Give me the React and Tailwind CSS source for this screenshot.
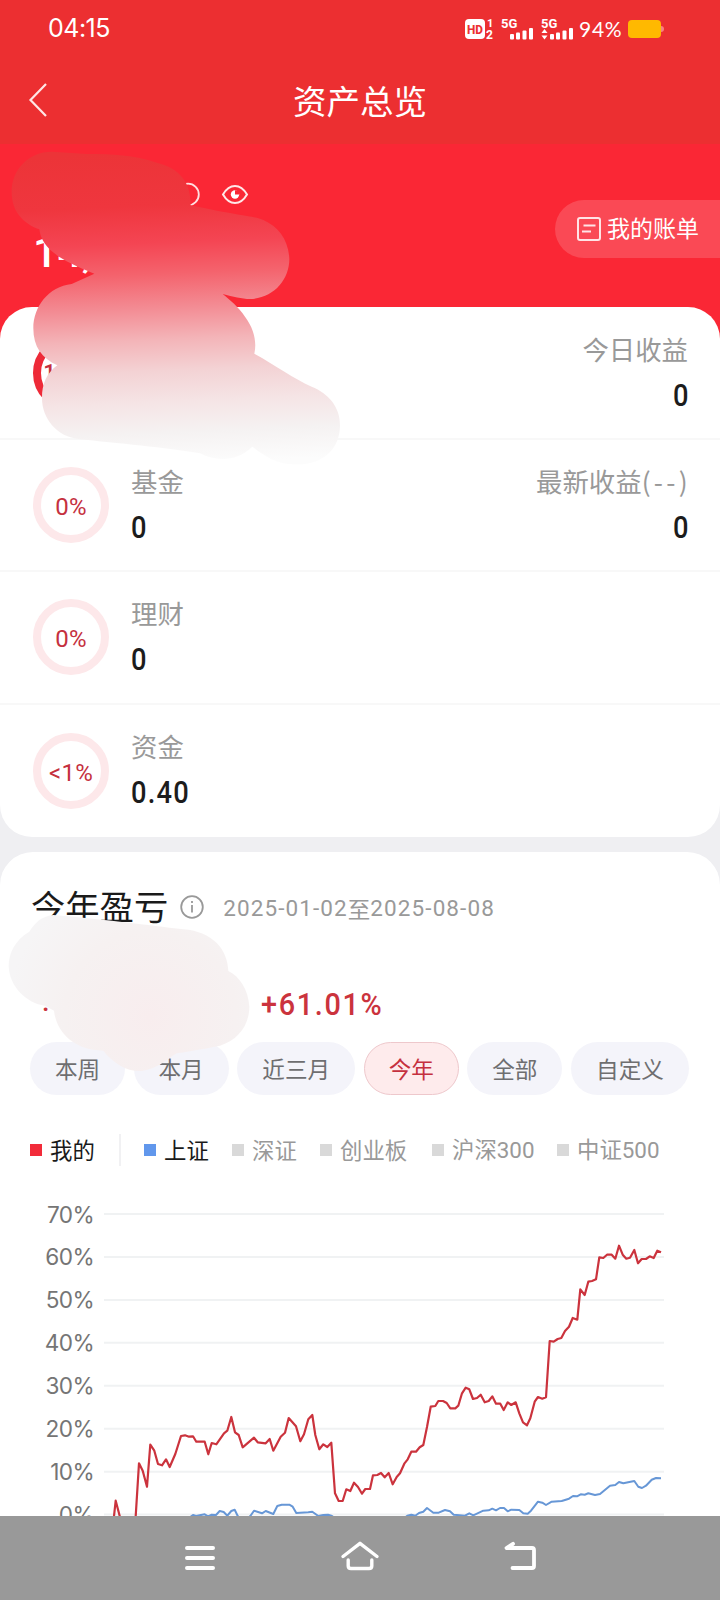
import { clsx } from 'clsx';

const ACCOUNTS = [
  { name: '', value: '', percent: '100%', profitLabel: '今日收益', profit: '0', full: true },
  { name: '基金', value: '0', percent: '0%', profitLabel: '最新收益', profitDate: '(--)', profit: '0' },
  { name: '理财', value: '0', percent: '0%' },
  { name: '资金', value: '0.40', percent: '<1%' }
];

const PERIODS = [
  { label: '本周' },
  { label: '本月' },
  { label: '近三月', wide: true },
  { label: '今年', active: true },
  { label: '全部' },
  { label: '自定义', wide: true }
];

const INDEXES = [
  { label: '上证', active: true, width: 'w-[88px]' },
  { label: '深证', width: 'w-[88px]' },
  { label: '创业板', width: 'w-[112px]' },
  { label: '沪深', digits: '300', width: 'w-[125px]' },
  { label: '中证', digits: '500', width: 'w-[110px]' }
];

const GRID = ['70%', '60%', '50%', '40%', '30%', '20%', '10%', '0%'];

const MINE =
  '114,316 115.7,300.7 119.7,316 121,322 134,322 135.7,316 139,263.3 142.7,270.7 147,286.7 150.3,244.7 154.3,250.7 158,264 162,265.3 166,259.3 169.7,267 175.3,254 181,236 185,235.3 189,236.7 193,236.3 196.3,241.7 204.7,241.7 208.3,254.3 211.7,243 216.3,244.3 224,233.3 227.3,230.7 231.3,217 235,232.3 238.7,235 242.7,247.3 254,237.7 257.7,242.3 265.7,243.3 269.7,239 273.3,250.7 280.7,236.7 285,232.7 288.7,218 296,226.3 300.3,241.3 304,234.3 308.3,219.3 312.3,215 315.3,235 319.3,249.3 323.3,244.3 327.3,247 331.3,242.7 335,293.3 338.7,301 342.7,301 346.3,289.3 350.3,291 354,282.7 358,287 362,293.7 365.3,289 370,289 373,275.3 377.3,275 381,273 384.7,277.3 388.7,273 392.7,284.3 396.7,277 400,273.3 404.3,263.7 407.7,259.3 411.3,251.7 416,251.7 419.7,247.3 423.3,245 427,227 430.7,206.7 435.3,206 438.3,201 443,201 446.7,203 450.3,208.3 455.3,208.3 458.3,205.7 462,193.3 465.7,187.7 469.3,189.3 473,199 477,198 480.7,194.7 484.7,202.3 488.7,201 492.3,196.3 496,203.7 500.3,203.7 503.7,210 507.7,202.3 511.3,205 515.7,202.3 519.3,213.3 523,222.3 527,225.3 530.3,218.3 534.7,201.7 538,197 542.3,198.7 546,197.3 549.7,141 553.7,141.7 557.7,139 561.3,138 565,131 569,126.7 572.7,118 577.3,119.7 580.3,89.3 584.7,95 588.3,81.7 592,81 596,79.3 599.3,57.3 603.3,58 607,54.7 611.7,54.7 615.3,58.7 619,45.7 622.7,54.7 626.3,58.7 630,57.7 634.3,50 638,63.3 641.7,59 646,59 649.7,56.3 653.7,58 657.3,50.7 661,52.3';

const SHANGHAI =
  '189,318 193,315 196,316 204.7,314.3 208,316.3 211.7,314.7 216,315 219.7,311 223.7,312 227.3,315.7 231.3,311 234.7,309.7 237.7,316 241,319 247,319 250.3,316 254,310.7 262,313.3 265.7,311 273.3,314 277.3,306 281.7,304.7 289.3,304.7 292.7,306.7 296.3,313 308.3,312.3 312.3,311.7 318.3,316 323.3,315 328,314.7 332,316 340,322 400,322 407.3,315.7 411.3,314.7 415.3,315.7 419,313 423.3,311.7 427,308 433.3,312.7 438.7,312.7 445,310 450,311.3 453.7,314.7 465,315.7 469.3,313.3 473.3,315.3 483.3,310.7 488.7,310.3 492.3,308.7 496,310.3 500,308 504,308 507.7,311.3 511.3,309.7 519.3,310 523.3,313.3 527.7,313.7 531,310.7 538,301.7 542.3,302.7 546,305 551.7,301.7 561.7,301 569,298.7 573,296 577,296.3 580.7,294.3 584.7,294.7 588.3,293.3 595,295 600,294 610,285.7 615.3,285 619,282 623.3,283.3 634.3,281 638.3,286.7 642,288 646,285.7 651.7,279.7 656,278 661,278.3';

const Signal = ({ arrows }) => (
  <svg className="overflow-visible" width="32" height="22" viewBox="0 0 32 22" fill="#fff">
    <text x="0" y="10" fontSize="13" fontWeight="700" fontFamily="Roboto">5G</text>
    <rect x="9" y="16" width="4" height="5.5" rx="1" />
    <rect x="15" y="14.5" width="4" height="7" rx="1" />
    <rect x="21.5" y="12.5" width="4" height="9" rx="1" />
    <rect x="28" y="10" width="4" height="11.5" rx="1" />
    {arrows && <path d="M0.5 15 L3.5 11 L6.5 15Z M0.5 17.5 L3.5 21.5 L6.5 17.5Z" />}
  </svg>
);

const StatusBar = () => (
  <div className="flex h-14 items-center justify-between pl-12 pr-[56px] pt-px text-white">
    <span className="font-[Inter] text-[25px] leading-none tracking-[-0.5px]">04:15</span>
    <div className="flex items-center">
      <svg className="overflow-visible" width="29" height="22" viewBox="0 0 29 22">
        <rect x="0" y="1" width="20" height="20" rx="4" fill="#fff" />
        <text x="2" y="15.8" fontSize="13" fontWeight="800" fontFamily="Roboto" fill="#ec2f31" textLength="16" lengthAdjust="spacingAndGlyphs">HD</text>
        <text x="22" y="9" fontSize="11" fontWeight="700" fontFamily="Roboto" fill="#fff">1</text>
        <text x="21" y="20.8" fontSize="12" fontWeight="700" fontFamily="Roboto" fill="#fff">2</text>
      </svg>
      <div className="ml-[7px] flex gap-2">
        <Signal />
        <Signal arrows />
      </div>
      <span className="ml-1.5 w-[49px] font-[Lato] text-[21px] leading-none tracking-[0.7px]">94%</span>
      <div className="h-[18px] w-[33px] rounded bg-[#ffb900]"></div>
      <div className="h-1.5 w-[3px] rounded-r bg-[#f88080]"></div>
    </div>
  </div>
);

const Header = () => (
  <div className="relative flex h-[88px] items-center justify-center text-white">
    <svg className="absolute left-7 top-[26px]" width="20" height="36" viewBox="0 0 20 36" fill="none" stroke="#ffe6e6" strokeWidth="2.2">
      <path d="M18 2 L2.5 18 L18 34" />
    </svg>
    <h1 className="text-[33.5px] leading-none">资产总览</h1>
  </div>
);

const Hero = () => (
  <div className="flex h-[197px] justify-between bg-[#fa2735] text-white">
    <div className="pl-[33px] pt-[38px]">
      <div className="flex h-6 items-center pl-[143px]">
        <svg width="24" height="24" viewBox="0 0 24 24" fill="none" stroke="#ffdfe0" strokeWidth="1.8">
          <circle cx="12" cy="12.5" r="10.8" />
        </svg>
        <svg className="ml-[21px]" width="28" height="22" viewBox="0 0 28 22" fill="none" stroke="#ffe8e8" strokeWidth="2">
          <path d="M2 11.5 C5.5 5.5 9.5 3 14 3 S22.5 5.5 26 11.5 C22.5 17.5 18.5 20 14 20 S5.5 17.5 2 11.5Z" />
          <circle cx="14" cy="11.5" r="4.2" fill="#fff" stroke="none" />
          <path d="M14 11.5 V7.3 H18 V11.5Z" fill="#fa2735" stroke="none" />
        </svg>
      </div>
      <div className="mt-[25px] font-[Roboto] text-[43px] font-medium leading-none">14,</div>
    </div>
    <div className="mt-14 flex h-[58px] w-[165px] items-center rounded-l-full bg-white/16 pl-[22px]">
      <svg width="24" height="24" viewBox="0 0 24 24" fill="none" stroke="#ffe4e6" strokeWidth="2">
        <rect x="1" y="1" width="22" height="22" rx="2" />
        <path d="M6.5 8.5 H18.5 M5 14.5 H14" />
      </svg>
      <span className="ml-[6px] pb-1 text-[23px] leading-none">我的账单</span>
    </div>
  </div>
);

const Ring = ({ percent, full }) => (
  <div
    className={clsx(
      'flex h-[76px] w-[76px] items-center justify-center rounded-full border-8 font-[Roboto] leading-none text-[#c5303e]',
      full ? 'border-[#ee2a38] text-[22px] font-medium tracking-[0.5px]' : 'border-[#fde8ea] pt-1 text-[24px] tracking-[0.3px]'
    )}
  >
    {percent}
  </div>
);

const AccountRow = ({ account }) => (
  <div className="flex h-[132.2px] items-center border-b-2 border-[#f8f8f8] px-[33px] last:border-0">
    <Ring percent={account.percent} full={account.full} />
    <div className="ml-[22px] flex flex-1 flex-col gap-[18px]">
      <span className="h-[27px] text-[26.4px] leading-[25px] text-[#999]">{account.name}</span>
      <span className="h-[30px] origin-left scale-x-[0.88] font-[Roboto] text-[31px] font-medium leading-[30px] tracking-[1.4px] text-[#1c1c1c]">{account.value}</span>
    </div>
    {account.profit && (
      <div className="-mr-[1px] flex flex-col items-end gap-[18px]">
        <span className="h-[27px] whitespace-nowrap text-[26.4px] leading-[25px] text-[#999]">
          {account.profitLabel}
          {account.profitDate && <span className="-mr-[3px] tracking-[3.3px]">{account.profitDate}</span>}
        </span>
        <span className="-mr-px h-[30px] origin-right scale-x-[0.88] font-[Roboto] text-[31px] font-medium leading-[30px] text-[#1c1c1c]">{account.profit}</span>
      </div>
    )}
  </div>
);

const Chart = () => (
  <svg className="block" width="720" height="316" viewBox="0 0 720 316">
    {GRID.map((label, i) => (
      <g key={label}>
        <line x1="104" x2="664" y1={14 + i * 42.94} y2={14 + i * 42.94} stroke="#f0f2f3" strokeWidth="2" />
        <text x="94" y={22.5 + i * 42.94} textAnchor="end" fontFamily="Inter" fontSize="22.6" letterSpacing="-0.6" fill="#757575">{label}</text>
      </g>
    ))}
    <polyline points={SHANGHAI} fill="none" stroke="#6797d6" strokeWidth="2" strokeLinejoin="round" />
    <polyline points={MINE} fill="none" stroke="#cb333d" strokeWidth="2.2" strokeLinejoin="round" />
  </svg>
);

const ProfitCard = () => (
  <div className="mt-[15px] rounded-t-[33px] bg-white">
    <div className="flex items-center pl-[31px] pt-9">
      <h2 className="h-[38px] text-[34.3px] leading-[35px] text-[#1a1a1a]">今年盈亏</h2>
      <svg className="ml-3" width="24" height="24" viewBox="0 0 24 24" fill="none" stroke="#999" strokeWidth="1.8">
        <circle cx="12" cy="12" r="10.8" />
        <path d="M12 10 V17.5 M12 6 V8" />
      </svg>
      <span className="ml-[19px] flex items-center pt-0.5 font-[Roboto] text-[22.5px] leading-none tracking-[1.1px] text-[#999]">
        2025-01-02<span className="font-['Noto_Sans_CJK_SC'] tracking-normal">至</span>2025-08-08
      </span>
    </div>
    <div className="mt-[63px] flex h-[31px] items-center pl-[42px] font-[Roboto] text-[31px] font-medium leading-none text-[#cb333d]">
      <span className="w-[219px] pb-[5px] text-[27px]">.</span>
      <span className="origin-left scale-x-[0.93] tracking-[1.8px]">+61.01%</span>
    </div>
    <div className="mt-[22px] flex justify-between pl-[30px] pr-[31px]">
      {PERIODS.map((p) => (
        <button
          key={p.label}
          className={clsx(
            'flex h-[53px] items-center justify-center rounded-full pt-0.5 text-[22.6px] leading-none',
            p.wide ? 'w-[118px]' : 'w-[95px]',
            p.active ? 'border border-[#eec8cc] bg-[#feebec] text-[#c5303e]' : 'bg-[#f4f4fa] text-[#6e6e70]'
          )}
        >
          {p.label}
        </button>
      ))}
    </div>
    <div className="mt-[39px] flex h-8 items-center pl-[30px] text-[22.4px] leading-none text-[#999]">
      <div className="flex w-[89px] items-center text-[#1a1a1a]">
        <i className="mr-2 h-3 w-3 bg-[#f22b3a]"></i>
        <span className="pb-px">我的</span>
      </div>
      <div className="mr-[23px] h-8 w-0.5 bg-[#f1f1f3]"></div>
      {INDEXES.map((item) => (
        <div key={item.label} className={clsx('flex items-center', item.width, item.active && 'text-[#1a1a1a]')}>
          <i className={clsx('mr-2 h-3 w-3 shrink-0', item.active ? 'bg-[#6197ec]' : 'bg-[#d9d9d9]')}></i>
          <span className="whitespace-nowrap pb-px">
            {item.label}
            {item.digits && <span className="font-[Roboto]">{item.digits}</span>}
          </span>
        </div>
      ))}
    </div>
    <div className="pt-[34px]">
      <Chart />
    </div>
  </div>
);

const NavBar = () => (
  <div className="flex h-[84px] items-center justify-center gap-[120px] bg-[#999]">
    <svg width="40" height="40" viewBox="0 0 40 40" stroke="#fff" strokeWidth="4" strokeLinecap="round">
      <path d="M7 10 H33 M7 20 H33 M7 30 H33" />
    </svg>
    <svg width="40" height="40" viewBox="0 0 40 40" fill="none" stroke="#fff" strokeWidth="3.4" strokeLinecap="round" strokeLinejoin="round">
      <path d="M3 18.5 L20 5.3 L37 18.5" />
      <path d="M8.2 22 V28 Q8.2 30.5 11 30.5 H29 Q31.8 30.5 31.8 28 V22" />
    </svg>
    <svg width="40" height="40" viewBox="0 0 40 40" fill="none" stroke="#fff" strokeWidth="3.8" strokeLinecap="round" strokeLinejoin="round">
      <path d="M13 5.8 L6.5 10 H32 Q34 10 34 12 V28 Q34 30 32 30 H12.5" />
    </svg>
  </div>
);

// Brush strokes that hide the private amounts
const Redactions = () => (
  <>
    <svg className="absolute left-0 top-[140px]" width="360" height="330" viewBox="0 0 1080 990">
      <defs>
        <linearGradient id="brushTop" gradientUnits="userSpaceOnUse" x1="500" y1="35" x2="540" y2="970">
          <stop offset="0" stopColor="#ec3438" />
          <stop offset="0.17" stopColor="#ef363e" />
          <stop offset="0.29" stopColor="#f44553" />
          <stop offset="0.39" stopColor="#f4636d" />
          <stop offset="0.5" stopColor="#f38c94" />
          <stop offset="0.6" stopColor="#f3b4b8" />
          <stop offset="0.7" stopColor="#f3d2d4" />
          <stop offset="0.8" stopColor="#f5e4e5" />
          <stop offset="0.9" stopColor="#f5f2f2" />
          <stop offset="1" stopColor="#fcfcfc" />
        </linearGradient>
      </defs>
      <path
        fill="url(#brushTop)"
        d="M155 35 C85 35 35 90 35 155 C35 215 70 250 118 268 C125 320 165 355 283 401 L215 432 C145 440 100 500 100 565 C100 620 125 655 172 676 C140 700 126 730 126 775 C126 835 170 890 235 897 C350 910 500 922 600 940 C650 965 710 965 757 920 C790 945 830 975 890 973 C965 975 1020 930 1020 855 C1020 800 985 760 935 740 C880 715 830 678 763 641 C770 610 765 570 735 530 C715 500 690 480 668 462 C700 470 725 477 750 477 C820 475 868 420 868 357 C866 300 835 260 790 240 C760 228 720 228 572 196 C572 150 560 90 470 68 C400 45 340 42 260 42Z"
      />
    </svg>
    <svg className="absolute left-0 top-[840px]" width="360" height="270" viewBox="0 0 1080 810">
      <defs>
        <radialGradient id="brushBottom" gradientUnits="userSpaceOnUse" cx="450" cy="530" r="430">
          <stop offset="0" stopColor="#f8edee" />
          <stop offset="0.6" stopColor="#f6f1f1" />
          <stop offset="1" stopColor="#f6f5f6" />
        </radialGradient>
      </defs>
      <path
        fill="url(#brushBottom)"
        d="M160 225 C120 230 105 250 88 275 C45 300 26 340 26 378 C28 440 80 490 135 497 L162 512 C168 570 215 630 310 632 C340 670 380 695 425 693 C475 685 490 665 530 640 C580 632 620 625 660 617 C715 600 748 555 748 500 C745 450 720 410 685 393 C683 330 640 275 550 268 C440 255 330 240 160 225Z"
      />
    </svg>
  </>
);

const App = () => {
  return (
    <div className="relative h-[1600px] w-[720px] overflow-hidden bg-[#efeff2] font-['Noto_Sans_CJK_SC',sans-serif]">
      <div className="bg-[#ec2f31]">
        <StatusBar />
        <Header />
      </div>
      <Hero />
      <div className="-mt-[34px] h-[530px] rounded-[32px] bg-white pt-px">
        {ACCOUNTS.map((account, i) => (
          <AccountRow key={i} account={account} />
        ))}
      </div>
      <ProfitCard />
      <NavBar />
      <Redactions />
    </div>
  );
};

export default App;
